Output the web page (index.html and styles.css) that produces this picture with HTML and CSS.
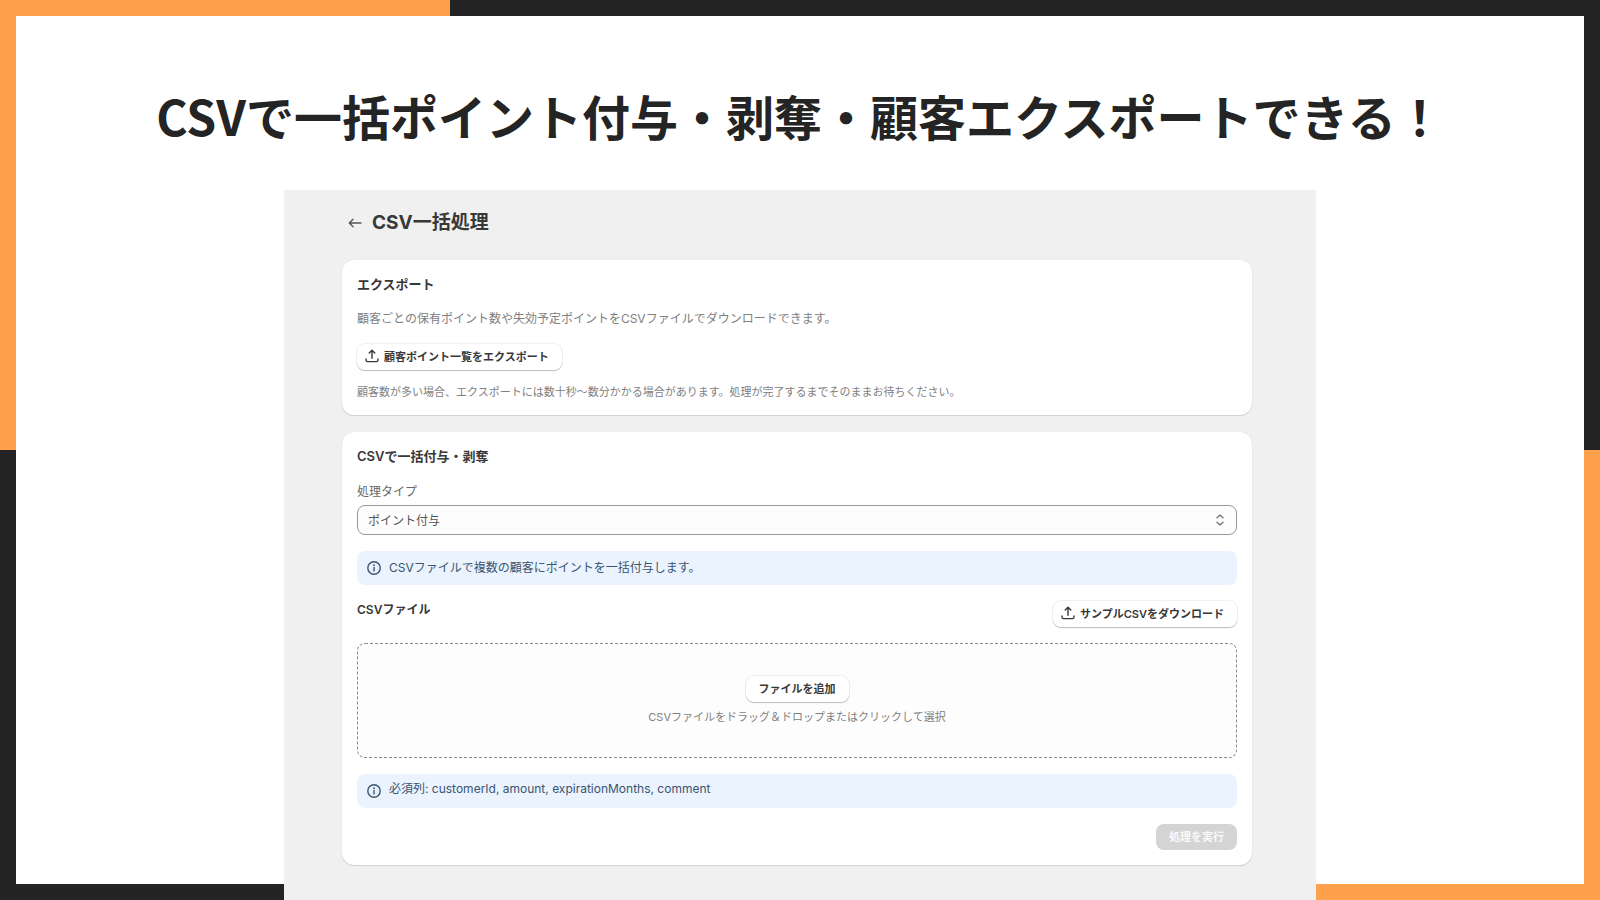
FILE: index.html
```html
<!DOCTYPE html>
<html lang="ja">
<head>
<meta charset="utf-8">
<meta name="viewport" content="width=device-width, initial-scale=1">
<title>CSV一括処理</title>
<link rel="stylesheet" href="styles.css">
</head>
<body>
<svg class="sprite" aria-hidden="true">
  <symbol id="icon-upload" viewBox="0 0 14 14">
    <path d="M7 9.200V1.400M4.200 4.100 7 1.300l2.800 2.800M1 9.900v1c0 1 .7 1.700 1.700 1.700h8.600c1 0 1.700-.7 1.700-1.700v-1"/>
  </symbol>
  <symbol id="icon-info" viewBox="0 0 14 14">
    <circle cx="7" cy="7" r="6.200"/>
    <path d="M7 6.500v3.500"/>
    <circle class="icon-dot" cx="7" cy="4.200" r=".9"/>
  </symbol>
</svg>
<div class="slide">
  <div class="sheet">
    <h1 class="slide-title">CSVで一括ポイント付与・剥奪・顧客エクスポートできる！</h1>
    <main class="app">
      <header class="app-header">
        <a class="back" href="#" aria-label="戻る">
          <svg class="icon" viewBox="0 0 14 14"><path d="M13 7H1.500M5 3.300 1.300 7 5 10.700"/></svg>
        </a>
        <h2 class="app-title">CSV一括処理</h2>
      </header>

      <section class="card export">
        <h3 class="card-title">エクスポート</h3>
        <p class="description">顧客ごとの保有ポイント数や失効予定ポイントをCSVファイルでダウンロードできます。</p>
        <button class="button" type="button">
          <svg class="icon"><use href="#icon-upload"/></svg>
          顧客ポイント一覧をエクスポート
        </button>
        <p class="note">顧客数が多い場合、エクスポートには数十秒〜数分かかる場合があります。処理が完了するまでそのままお待ちください。</p>
      </section>

      <section class="card">
        <h3 class="card-title">CSVで一括付与・剥奪</h3>
        <div class="field">
          <label class="field-label" for="process-type">処理タイプ</label>
          <div class="select-box">
            <select class="select" id="process-type">
              <option>ポイント付与</option>
            </select>
            <svg class="select-arrows" viewBox="0 0 10 14"><path d="M2 4.700 5 1.900l3 2.800M2 9.300l3 2.800 3-2.800"/></svg>
          </div>
        </div>
        <div class="banner">
          <svg class="icon"><use href="#icon-info"/></svg>
          <p class="banner-text">CSVファイルで複数の顧客にポイントを一括付与します。</p>
        </div>
        <div class="file-row">
          <h4 class="file-title">CSVファイル</h4>
          <button class="button" type="button">
            <svg class="icon"><use href="#icon-upload"/></svg>
            サンプルCSVをダウンロード
          </button>
        </div>
        <div class="dropzone">
          <button class="button" type="button">ファイルを追加</button>
          <p class="dropzone-hint">CSVファイルをドラッグ＆ドロップまたはクリックして選択</p>
        </div>
        <div class="banner">
          <svg class="icon"><use href="#icon-info"/></svg>
          <p class="banner-text columns">必須列: customerId, amount, expirationMonths, comment</p>
        </div>
        <button class="button run" type="button" disabled>処理を実行</button>
      </section>
    </main>
  </div>
</div>
</body>
</html>
```

FILE: styles.css
```css
* {
  box-sizing: border-box;
}

body,
h1,
h2,
h3,
h4,
p {
  margin: 0;
}

body,
button,
select {
  font-family: Inter, "Noto Sans CJK JP", sans-serif;
}

.sprite {
  display: none;
}

.slide {
  display: flex;
  min-height: 100vh;
  padding: 16px;
  background:
    linear-gradient(#ffa04d, #ffa04d) left top / 450px 50% no-repeat,
    linear-gradient(#ffa04d, #ffa04d) right bottom / 450px 50% no-repeat,
    #242424;
}

.sheet {
  flex: 1;
  display: flex;
  flex-direction: column;
  align-items: center;
  padding-top: 63px;
  background: #fff;
}

.slide-title {
  margin-bottom: 39px;
  font-family: "Noto Sans CJK JP", sans-serif;
  font-size: 48px;
  font-weight: 700;
  line-height: 72px;
  text-align: center;
  color: #242424;
}

.app {
  flex: 1;
  width: 100%;
  max-width: 1032px;
  margin-bottom: -16px;
  padding: 19px 64px 24px 58px;
  background: #f0f0f0;
  color: #383838;
}

.app-header {
  display: flex;
  align-items: center;
  gap: 10px;
  margin-bottom: 23px;
  padding-left: 6px;
}

.app-title {
  font-size: 19px;
  font-weight: 700;
  line-height: 28px;
}

.back {
  display: flex;
  color: #555;
}

.icon {
  flex: none;
  width: 14px;
  height: 14px;
  fill: none;
  stroke: currentColor;
  stroke-width: 1.4;
  stroke-linecap: round;
  stroke-linejoin: round;
}

.icon-dot {
  fill: currentColor;
  stroke: none;
}

.card {
  display: flex;
  flex-direction: column;
  align-items: stretch;
  gap: 16px;
  padding: 15px;
  border-radius: 12px;
  background: #fff;
  box-shadow: 0 1px 1px rgba(0, 0, 0, 0.12), 0 0 1px rgba(0, 0, 0, 0.15);
}

.card + .card {
  margin-top: 17px;
}

.export {
  gap: 15px;
}

.card-title {
  font-size: 13px;
  font-weight: 600;
  line-height: 18px;
}

.file-title {
  font-size: 12px;
  font-weight: 600;
  line-height: 18px;
}

.description {
  font-size: 12px;
  line-height: 21px;
  color: #808080;
}

.note {
  font-size: 11px;
  line-height: 15px;
  color: #808080;
}

.button {
  display: inline-flex;
  align-items: center;
  align-self: flex-start;
  gap: 5px;
  height: 26px;
  padding: 0 13px 2px;
  border: 0;
  border-radius: 8px;
  background: #fff;
  box-shadow: 0 1px 1px rgba(0, 0, 0, 0.22), 0 0 1px 1px rgba(0, 0, 0, 0.06);
  font-size: 11px;
  font-weight: 600;
  color: #383838;
}

.button .icon {
  margin-left: -5px;
}

.field {
  display: flex;
  flex-direction: column;
  gap: 2px;
}

.field-label {
  font-size: 12px;
  line-height: 22px;
  color: #666;
}

.select-box {
  display: grid;
  align-items: center;
}

.select {
  grid-area: 1 / 1;
  height: 30px;
  padding: 0 32px 0 10px;
  border: 1px solid #999;
  border-radius: 8px;
  background: #fdfdfd;
  appearance: none;
  font-size: 12px;
  color: #555;
}

.select-arrows {
  grid-area: 1 / 1;
  justify-self: end;
  width: 10px;
  height: 14px;
  margin-right: 12px;
  fill: none;
  stroke: #777;
  stroke-width: 1.4;
  stroke-linecap: round;
  stroke-linejoin: round;
  pointer-events: none;
}

.banner {
  display: flex;
  align-items: center;
  gap: 8px;
  min-height: 34px;
  padding: 0 10px;
  border-radius: 8px;
  background: #eaf3fe;
  color: #3a5570;
}

.banner-text {
  font-size: 12px;
  line-height: 18px;
}

.columns {
  padding-bottom: 4px;
}

.file-row {
  display: flex;
  justify-content: space-between;
}

.dropzone {
  display: flex;
  flex-direction: column;
  align-items: center;
  justify-content: center;
  gap: 6px;
  min-height: 115px;
  border: 1px dashed #8a8a8a;
  border-radius: 8px;
  background: #fdfdfd;
}

.dropzone .button {
  align-self: center;
}

.dropzone-hint {
  font-size: 11px;
  line-height: 18px;
  color: #808080;
}

.run {
  align-self: flex-end;
  background: #d4d4d4;
  box-shadow: none;
  color: #fafafa;
}
```
